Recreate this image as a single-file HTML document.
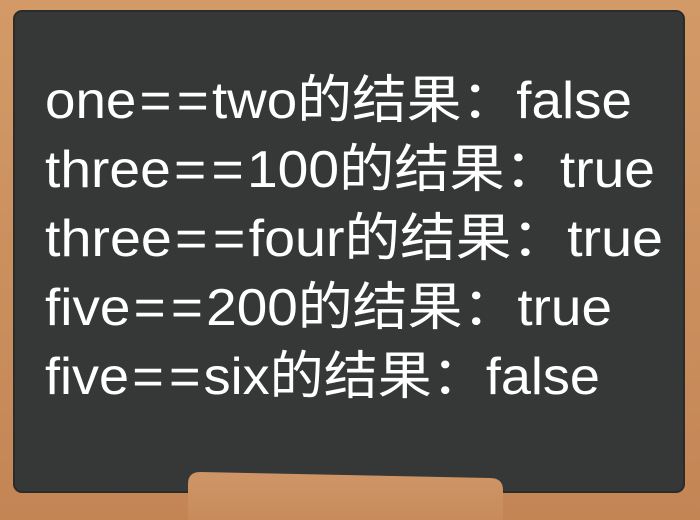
<!DOCTYPE html>
<html><head><meta charset="utf-8"><style>
html,body{margin:0;padding:0;width:700px;height:520px;overflow:hidden;background:#c98d5c}
</style></head><body>
<svg width="700" height="520" xmlns="http://www.w3.org/2000/svg">
<defs>
<linearGradient id="wood" x1="0" y1="0" x2="0" y2="1">
<stop offset="0" stop-color="#d39a68"/><stop offset="1" stop-color="#c48555"/>
</linearGradient>
<linearGradient id="tray" x1="0" y1="0" x2="0" y2="1">
<stop offset="0" stop-color="#cf9566"/><stop offset="1" stop-color="#c88c5c"/>
</linearGradient>
</defs>
<rect width="700" height="520" fill="url(#wood)"/>
<rect x="14" y="11" width="670" height="481" rx="8" fill="#353837"/>
<rect x="14" y="11" width="670" height="481" rx="8" fill="none" stroke="#2a2c2b" stroke-width="2"/>
<path d="M188 484 Q188 472 200 472 L490 478 Q503 478 503 490 L503 520 L188 520Z" fill="url(#tray)"/>
<g font-family="Liberation Sans, Noto Sans CJK SC, sans-serif" font-size="52" fill="#ffffff">
<text x="45" y="118" textLength="587" lengthAdjust="spacingAndGlyphs">one<tspan dx="3">=</tspan><tspan dx="5">=</tspan><tspan dx="3">two的结果：false</tspan></text>
<text x="45" y="187" textLength="610" lengthAdjust="spacingAndGlyphs">three<tspan dx="3">=</tspan><tspan dx="5">=</tspan><tspan dx="3">100的结果：true</tspan></text>
<text x="45" y="256" textLength="618" lengthAdjust="spacingAndGlyphs">three<tspan dx="3">=</tspan><tspan dx="5">=</tspan><tspan dx="3">four的结果：true</tspan></text>
<text x="45" y="325" textLength="567" lengthAdjust="spacingAndGlyphs">five<tspan dx="3">=</tspan><tspan dx="5">=</tspan><tspan dx="3">200的结果：true</tspan></text>
<text x="45" y="394" textLength="555" lengthAdjust="spacingAndGlyphs">five<tspan dx="3">=</tspan><tspan dx="5">=</tspan><tspan dx="3">six的结果：false</tspan></text>
</g>
</svg>
</body></html>
